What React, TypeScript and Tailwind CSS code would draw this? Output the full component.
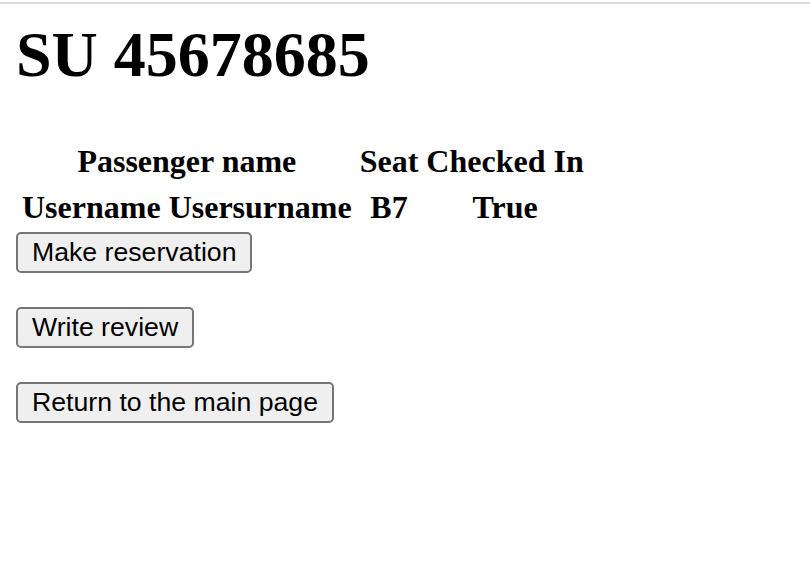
export default function App() {
  const rows = [{ name: 'Username Usersurname', seat: 'B7', checkedIn: 'True' }]

  return (
    <div className="min-h-[574px] bg-white">
      {/* Linea superior */}
      <div className="h-[2px] mt-[2px] bg-[#dcdcdc]" />

      <div className="px-4 pt-[14px] font-['Liberation_Serif',serif] text-black">
        <h1 className="text-[64px] font-bold leading-[74px]">SU 45678685</h1>

        <table className="mt-[44px] border-separate border-spacing-[4px] text-[32px] font-bold">
          <thead>
            <tr>
              <th className="pt-[3px] pb-[2px] px-[2px] leading-[37px]">Passenger name</th>
              <th className="pt-[3px] pb-[2px] px-[2px] leading-[37px]">Seat</th>
              <th className="pt-[3px] pb-[2px] px-[2px] leading-[37px]">Checked In</th>
            </tr>
          </thead>
          <tbody>
            {rows.map((row) => (
              <tr key={row.name}>
                <th className="pt-[3px] pb-[2px] px-[2px] leading-[37px]">{row.name}</th>
                <th className="pt-[3px] pb-[2px] px-[2px] leading-[37px]">{row.seat}</th>
                <th className="pt-[3px] pb-[2px] px-[2px] leading-[37px]">{row.checkedIn}</th>
              </tr>
            ))}
          </tbody>
        </table>

        {/* Botones */}
        <div className="flex flex-col items-start gap-[34px] font-['Liberation_Sans',Arial,sans-serif]">
          <button className="h-[41px] px-[14px] text-[26.67px] leading-none bg-[#efefef] border-2 border-[#767676] rounded-[5px]">
            Make reservation
          </button>
          <button className="h-[41px] px-[14px] text-[26.67px] leading-none bg-[#efefef] border-2 border-[#767676] rounded-[5px]">
            Write review
          </button>
          <button className="h-[41px] px-[14px] text-[26.67px] leading-none bg-[#efefef] border-2 border-[#767676] rounded-[5px]">
            Return to the main page
          </button>
        </div>
      </div>
    </div>
  )
}
